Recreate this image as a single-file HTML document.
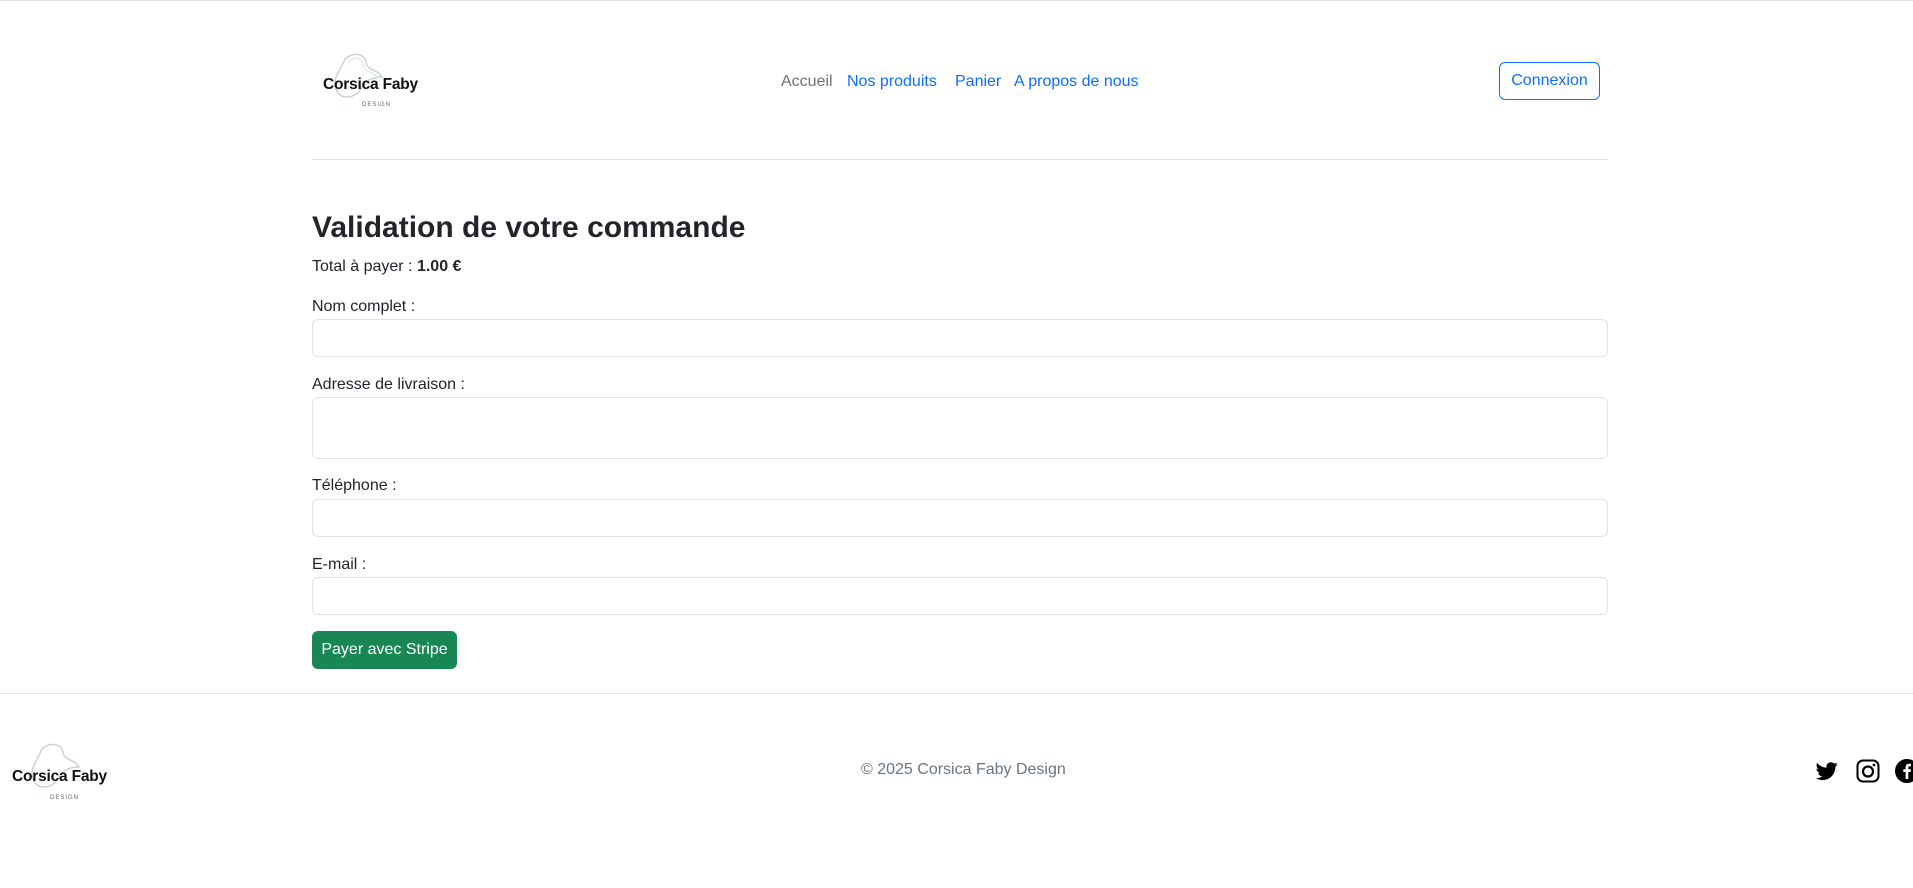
<!DOCTYPE html>
<html><head><meta charset="utf-8"><style>
*{box-sizing:border-box;margin:0;padding:0}
body{width:1913px;height:888px;position:relative;background:#fff;font-family:"Liberation Sans",sans-serif;color:#212529;font-size:16px;overflow:hidden;border-top:1px solid #dee2e6}
.a{position:absolute;white-space:nowrap}
.nav{top:72px;font-size:16px;color:#0d6efd}
.inp{position:absolute;left:312px;width:1296px;border:1px solid #dee2e6;border-radius:6px;background:#fff}
.lbl{position:absolute;left:312px;font-size:16px}
.logo .t{font-weight:bold;font-size:15.5px;color:#111;letter-spacing:-0.2px}
.logo .d{font-size:6px;color:#666;letter-spacing:1px}
</style></head><body>
<div class="a logo" style="left:320px;top:48px;width:102px;height:60px">
<svg class="a" style="left:6px;top:0" width="60" height="60" viewBox="0 0 60 60"><path d="M18 12 C24 2 40 4 40 14 C42 22 52 20 56 28 C50 28 40 30 36 38 C30 50 14 52 10 40 C6 30 14 22 18 12Z" fill="none" stroke="#c9d4d0" stroke-width="1.5"/><path d="M22 14 C27 6 37 8 37 16 C39 24 48 23 52 29" fill="none" stroke="#d9e4e0" stroke-width="1"/></svg>
<div class="a t" style="left:3px;top:27px">Corsica Faby</div>
<div class="a d" style="left:42px;top:53px">DESIGN</div>
</div>
<div class="a nav" style="left:781px;color:rgba(33,37,41,.65)">Accueil</div>
<div class="a nav" style="left:847px">Nos produits</div>
<div class="a nav" style="left:955px">Panier</div>
<div class="a nav" style="left:1014px">A propos de nous</div>
<div class="a" style="left:1499px;top:61px;width:101px;height:38px;border:1px solid #0d6efd;border-radius:6px;color:#0d6efd;text-align:center;line-height:36px">Connexion</div>
<div class="a" style="left:312px;top:158px;width:1296px;border-top:1px solid #dee2e6"></div>
<div class="a" style="left:312px;top:210px;font-size:30px;font-weight:bold">Validation de votre commande</div>
<div class="a" style="left:312px;top:257px">Total à payer : <b>1.00 €</b></div>
<div class="lbl" style="top:297px">Nom complet :</div>
<div class="inp" style="top:318px;height:38px"></div>
<div class="lbl" style="top:375px">Adresse de livraison :</div>
<div class="inp" style="top:396px;height:62px"></div>
<div class="lbl" style="top:476px">Téléphone :</div>
<div class="inp" style="top:498px;height:38px"></div>
<div class="lbl" style="top:555px">E-mail :</div>
<div class="inp" style="top:576px;height:38px"></div>
<div class="a" style="left:312px;top:630px;width:145px;height:38px;background:#198754;border-radius:6px;color:#fff;text-align:center;line-height:38px">Payer avec Stripe</div>
<div class="a" style="left:0;top:692px;width:1913px;border-top:1px solid #dee2e6"></div>
<div class="a logo" style="left:9px;top:738px;width:102px;height:64px">
<svg class="a" style="left:14px;top:0" width="60" height="60" viewBox="0 0 60 60"><path d="M18 12 C24 2 40 4 40 14 C42 22 52 20 56 28 C50 28 40 30 36 38 C30 50 14 52 10 40 C6 30 14 22 18 12Z" fill="none" stroke="#c9d4d0" stroke-width="1.5"/></svg>
<div class="a t" style="left:3px;top:29px">Corsica Faby</div>
<div class="a d" style="left:41px;top:56px">DESIGN</div>
</div>
<div class="a" style="left:861px;top:760px;color:#6c757d">© 2025 Corsica Faby Design</div>
<svg class="a" style="left:1815px;top:759px" width="24" height="22" viewBox="0 0 24 24"><path fill="#000" d="M23.6 4.6c-.9.4-1.8.6-2.8.8 1-.6 1.8-1.6 2.1-2.7-.9.6-2 1-3.1 1.2-.9-1-2.2-1.5-3.6-1.5-2.7 0-4.9 2.2-4.9 4.9 0 .4 0 .8.1 1.1C7.4 8.2 3.7 6.3 1.3 3.3.8 4 .6 4.9.6 5.800c0 1.7.9 3.2 2.2 4.1-.8 0-1.6-.2-2.2-.6v.1c0 2.4 1.7 4.4 3.9 4.8-.4.1-.8.2-1.3.2-.3 0-.6 0-.9-.1.6 2 2.4 3.400 4.6 3.4-1.7 1.3-3.8 2.1-6.1 2.1-.4 0-.8 0-1.2-.1 2.2 1.4 4.8 2.2 7.5 2.2 9.1 0 14-7.5 14-14v-.6c1-.7 1.8-1.6 2.5-2.5z"/></svg>
<svg class="a" style="left:1856px;top:758px" width="24" height="24" viewBox="0 0 24 24"><rect x="1.5" y="1.5" width="21" height="21" rx="5.5" fill="none" stroke="#000" stroke-width="2"/><circle cx="12" cy="12.5" r="5" fill="none" stroke="#000" stroke-width="2.2"/><circle cx="18" cy="6" r="1.4" fill="#000"/></svg>
<svg class="a" style="left:1895px;top:758px" width="24" height="24" viewBox="0 0 24 24"><circle cx="12" cy="12" r="12" fill="#000"/><path d="M13.3 20v-7h2.3l.4-2.7h-2.7V8.6c0-.8.3-1.3 1.4-1.3H16V4.9c-.3 0-1.1-.1-2-.1-2 0-3.4 1.2-3.4 3.5v2H8.3V13h2.3v7z" fill="#fff"/></svg>
</body></html>
